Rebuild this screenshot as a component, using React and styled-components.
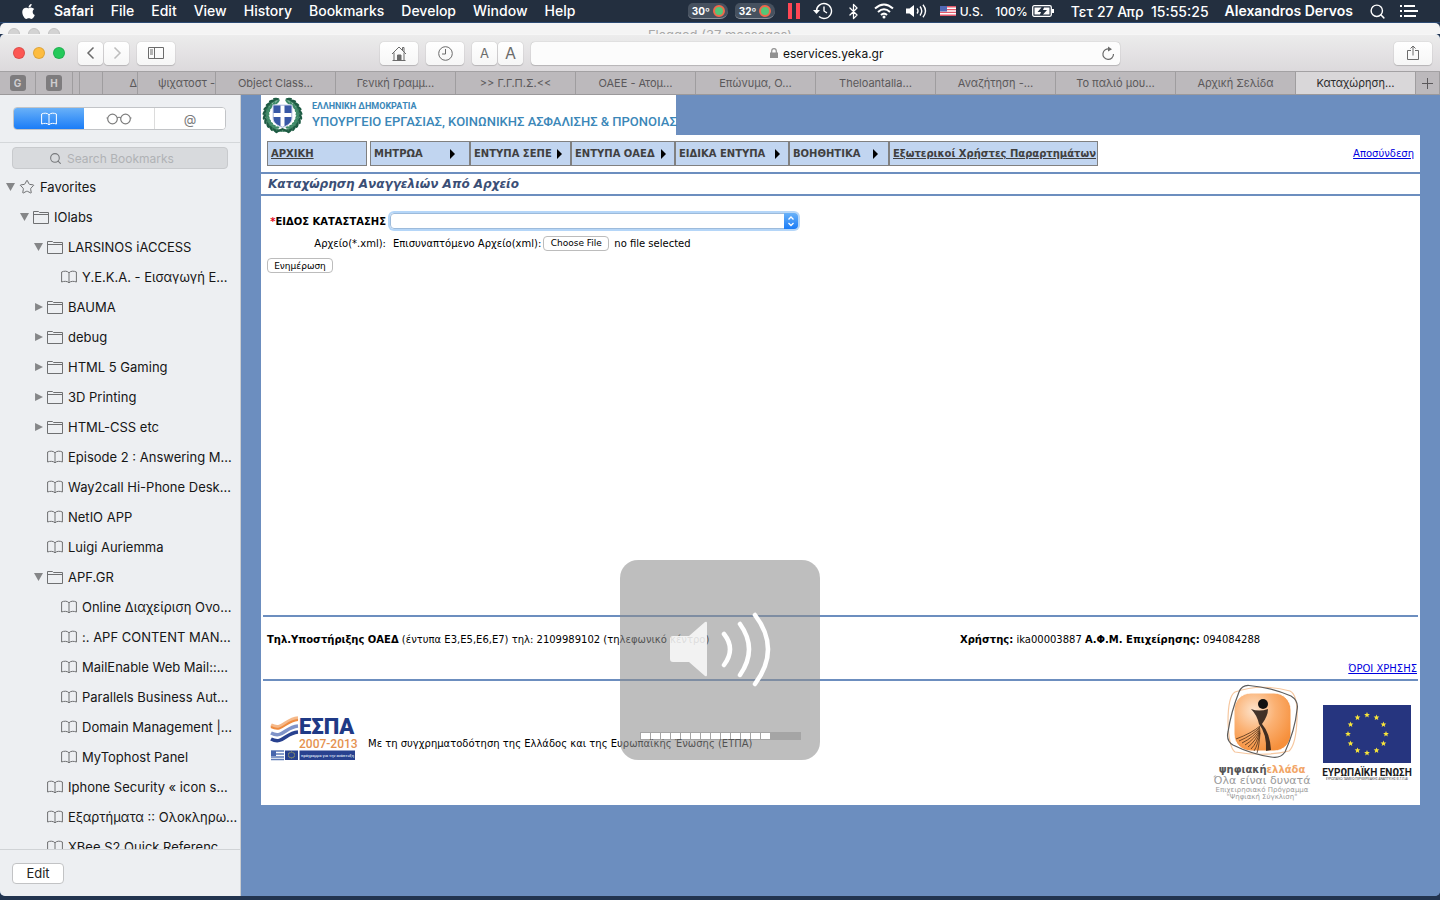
import React, { useRef, useState } from "react";
import styled, { createGlobalStyle } from "styled-components";
import { FaApple } from "react-icons/fa";
import { Bluetooth, Search, Star } from "lucide-react";

const ui = `Inter, Roboto, "Liberation Sans", sans-serif`;
const web = `"DejaVu Sans", "Liberation Sans", sans-serif`;

const GlobalStyle = createGlobalStyle`
  *, *::after {
    box-sizing: border-box;
  }
  body {
    margin: 0;
    overflow: hidden;
    background: #22344f;
  }
  button {
    font-family: inherit;
    padding: 0;
  }
`;

const Desktop = styled.div`
  display: flex;
  flex-direction: column;
  height: 100vh;
  padding-bottom: 4px;
  font-family: ${ui};
`;

const MenuBar = styled.header`
  display: flex;
  justify-content: space-between;
  align-items: center;
  height: 23px;
  flex: none;
  padding: 0 22px 0 20px;
  background: #232f3f;
  border-bottom: 1px solid #2c4a73;
  color: #fff;
  font-size: 14px;
  font-weight: 500;
  white-space: nowrap;
`;
const MenuList = styled.nav`
  display: flex;
  align-items: center;
  gap: 17px;
`;
const MenuItem = styled.button`
  border: none;
  background: none;
  color: #fff;
  font-size: 14px;
  line-height: 22px;
  font-weight: ${(p) => (p.$strong ? 600 : 500)};
`;
const Status = styled.div`
  display: flex;
  align-items: center;
  gap: ${(p) => p.$gap || 12}px;
  svg {
    display: block;
  }
`;
const Small = styled.span`
  font-size: 12px;
`;
const Temp = styled.span`
  display: flex;
  align-items: center;
  gap: 3px;
  width: 40px;
  height: 16px;
  padding-left: 4px;
  border-radius: 5px 8px 8px 5px;
  background: #46515f;
  border-bottom: 1px solid #8a929c;
  font-size: 10px;
  font-weight: 700;
  &::after {
    content: "";
    width: 12px;
    height: 12px;
    flex: none;
    border: 2px solid #f0694b;
    border-radius: 50%;
    background: #55c777;
  }
`;

const BackWindow = styled.div`
  height: 11px;
  flex: none;
  display: flex;
  gap: 8px;
  padding: 5px 8px 0;
  overflow: hidden;
  border-radius: 5px 5px 0 0;
  background: #f4f4f4;
  i {
    width: 12px;
    height: 12px;
    flex: none;
    border-radius: 50%;
    background: #d3d3d3;
    border: 1px solid #c2c2c2;
  }
  span {
    flex: 1;
    padding-right: 60px;
    text-align: center;
    font-size: 13px;
    line-height: 14px;
    color: #a8a8a8;
  }
`;

const Window = styled.div`
  display: flex;
  flex-direction: column;
  flex: 1;
  min-height: 0;
  overflow: hidden;
  border-radius: 5px;
  background: #6c8ebf;
`;
const Toolbar = styled.div`
  display: grid;
  grid-template-columns: 367fr 740fr 312fr;
  align-items: center;
  height: 37px;
  flex: none;
  padding: 0 8px 0 13px;
  background: linear-gradient(#ececec, #dcd9dc);
  border-top: 1px solid #f6f6f6;
`;
const ToolGroup = styled.div`
  display: flex;
  align-items: center;
  gap: 8px;
  justify-content: ${(p) => (p.$end ? "flex-end" : "flex-start")};
`;
const Lights = styled.div`
  display: flex;
  gap: 8px;
  margin-right: 5px;
`;
const Light = styled.button`
  width: 12px;
  height: 12px;
  border-radius: 50%;
  border: 1px solid rgba(0, 0, 0, 0.12);
  background: ${(p) => p.$color};
`;
const Pair = styled.div`
  display: flex;
  gap: 1px;
`;
const ToolButton = styled.button`
  display: flex;
  align-items: center;
  justify-content: center;
  width: ${(p) => p.$w || 38}px;
  height: 23px;
  border: none;
  border-radius: 4px;
  background: linear-gradient(#fff, #f6f6f6);
  box-shadow: 0 0 1px rgba(0, 0, 0, 0.35), 0 1px 1px rgba(0, 0, 0, 0.15);
  color: ${(p) => (p.$dim ? "#bdbdbd" : "#6b6b6b")};
  font-size: ${(p) => p.$size || 13}px;
`;
const Address = styled.div`
  position: relative;
  flex: 1;
  display: flex;
  align-items: center;
  justify-content: center;
  gap: 5px;
  height: 23px;
  border-radius: 4px;
  background: #fcfcfc;
  box-shadow: 0 0 1px rgba(0, 0, 0, 0.35), 0 1px 1px rgba(0, 0, 0, 0.15);
`;
const Url = styled.input`
  width: 108px;
  margin-right: -10px;
  border: none;
  padding: 0;
  outline: none;
  background: none;
  font-family: ${ui};
  font-size: 12px;
  color: #111;
`;
const Reload = styled.button`
  position: absolute;
  right: 5px;
  top: 4px;
  border: none;
  background: none;
  color: #6b6b6b;
  svg {
    display: block;
  }
`;

const TabBar = styled.div`
  display: flex;
  height: 24px;
  flex: none;
  background: #bcb9bc;
  border-top: 1px solid #a3a1a3;
  border-bottom: 1px solid #9b999b;
`;
const Tab = styled.button`
  display: flex;
  align-items: center;
  justify-content: ${(p) => (p.$end ? "flex-end" : "center")};
  flex: ${(p) => (p.$w ? `0 0 ${p.$w}px` : "1 1 0")};
  min-width: 0;
  overflow: hidden;
  border: none;
  border-right: 1px solid #9f9d9f;
  background: ${(p) => (p.$active ? "#d9d7d9" : "transparent")};
  color: ${(p) => (p.$active ? "#2b2b2b" : "#5a585a")};
  font-size: 11px;
  line-height: 22px;
  white-space: nowrap;
`;
const Pin = styled.span`
  width: 16px;
  height: 16px;
  border-radius: 3px;
  background: #7e7c7e;
  color: #cfcdcf;
  font-size: 10px;
  font-weight: 700;
  line-height: 16px;
`;

const Body = styled.div`
  display: flex;
  flex: 1;
  min-height: 0;
`;
const Sidebar = styled.aside`
  display: flex;
  flex-direction: column;
  width: 241px;
  flex: none;
  background: #edeff2;
  border-right: 1px solid #c9ccd0;
`;
const SideTop = styled.div`
  padding: 12px 14px 12px 13px;
  border-bottom: 1px solid #d4d7da;
`;
const Segments = styled.div`
  display: flex;
  height: 23px;
  border: 1px solid #c2c4c7;
  border-radius: 4px;
  background: #fff;
  overflow: hidden;
`;
const Segment = styled.button`
  flex: 1;
  display: flex;
  align-items: center;
  justify-content: center;
  border: none;
  border-left: ${(p) => (p.$line ? "1px solid #dcdcdc" : "none")};
  background: ${(p) => (p.$on ? "linear-gradient(#69b1f8, #1a7cf7)" : "#fff")};
  color: ${(p) => (p.$on ? "#fff" : "#7d7d7d")};
  font-size: 13px;
  line-height: 18px;
`;
const SearchBox = styled.label`
  display: flex;
  align-items: center;
  gap: 5px;
  height: 22px;
  margin: 4px 12px 3px;
  padding-left: 36px;
  border: 1px solid #c8cacd;
  border-radius: 4px;
  background: #d8dadd;
  color: #77797c;
  input {
    flex: 1;
    min-width: 0;
    border: none;
    outline: none;
    padding: 0;
    background: none;
    font-family: ${ui};
    font-size: 12px;
  }
  input::placeholder {
    color: #b0b2b5;
  }
`;
const Tree = styled.ul`
  flex: 1;
  min-height: 0;
  overflow: hidden;
  margin: 0;
  padding: 0;
  list-style: none;
`;
const Row = styled.li`
  display: flex;
  align-items: center;
  gap: 5px;
  height: 30px;
  padding-left: ${(p) => 6 + p.$level * 14}px;
  color: #6f7072;
  font-size: 13px;
  white-space: nowrap;
  svg {
    flex: none;
  }
  a {
    color: #161616;
    text-decoration: none;
  }
`;
const Arrow = styled.span`
  width: 9px;
  height: 8px;
  flex: none;
  margin-right: -1px;
  background: ${(p) => (p.$state ? "#858688" : "none")};
  clip-path: ${(p) =>
    p.$state === "open"
      ? "polygon(0 0, 100% 0, 50% 100%)"
      : "polygon(12% 0, 100% 50%, 12% 100%)"};
`;
const SideFoot = styled.div`
  height: 47px;
  flex: none;
  padding: 12px;
  border-top: 1px solid #d0d3d6;
`;
const EditButton = styled.button`
  width: 52px;
  height: 21px;
  border: 1px solid #c2c3c5;
  border-radius: 4px;
  background: #fff;
  color: #222;
  font-size: 13px;
  line-height: 18px;
`;

const Page = styled.main`
  display: flex;
  flex-direction: column;
  flex: 1;
  min-width: 0;
  padding: 0 20px 91px;
  background: #6c8ebf;
  font-family: ${web};
  font-size: 10px;
  color: #000;
`;
const Banner = styled.div`
  display: flex;
  align-items: center;
  align-self: flex-start;
  gap: 9px;
  width: 415px;
  height: 40px;
  flex: none;
  padding-left: 1px;
  background: #fff;
  color: #3b87b8;
  font-family: Roboto, "Liberation Sans", sans-serif;
  white-space: nowrap;
  svg {
    flex: none;
  }
`;
const Republic = styled.div`
  font-size: 9px;
  font-weight: 700;
  line-height: 13px;
`;
const Ministry = styled.div`
  font-size: 13px;
  font-weight: 500;
  line-height: 18px;
`;
const Sheet = styled.div`
  display: flex;
  flex-direction: column;
  flex: 1;
  background: #fff;
`;
const NavRow = styled.nav`
  display: flex;
  align-items: center;
  height: 37px;
  padding: 0 6px;
`;
const NavItem = styled.a`
  display: flex;
  align-items: center;
  justify-content: space-between;
  min-width: ${(p) => p.$w}px;
  height: 25px;
  margin-right: ${(p) => (p.$gap ? 3 : 0)}px;
  padding: 0 ${(p) => p.$pad || 1}px 0 3px;
  border: 1px solid #808080;
  background: #c1d5f0;
  color: #404040;
  font-weight: 700;
  white-space: nowrap;
  text-decoration: ${(p) => (p.$pad ? "none" : "underline")};
  &::after {
    content: "";
    display: ${(p) => (p.$pad ? "block" : "none")};
    border: 5px solid transparent;
    border-left-color: #000;
    border-right: none;
  }
`;
const PageLink = styled.a`
  margin-left: auto;
  color: #0000e0;
  text-decoration: underline;
`;
const Title = styled.h1`
  margin: 0;
  padding-left: 7px;
  border: solid #6c8ebf;
  border-width: 2px 0;
  color: #3b4f76;
  font-size: 12px;
  font-style: italic;
  line-height: 20px;
`;
const Form = styled.form`
  flex: 1;
  padding: 14px 6px;
  > button {
    display: block;
    margin-top: 4px;
  }
`;
const Field = styled.div`
  display: grid;
  grid-template-columns: 119px 1fr;
  align-items: center;
  column-gap: ${(p) => p.$gap || 4}px;
  height: 22px;
  white-space: nowrap;
  > label {
    justify-self: end;
  }
  b {
    color: #e3001b;
  }
`;
const SelectWrap = styled.div`
  position: relative;
  width: 408px;
  height: 16px;
  border-radius: 4px;
  box-shadow: 0 0 0 2px #b5d6f8;
  select {
    display: block;
    width: 100%;
    height: 16px;
    appearance: none;
    border: 1px solid #9dbbdb;
    border-radius: 4px;
    background: #fff;
    outline: none;
  }
  svg {
    position: absolute;
    right: 0;
    top: 0;
    border-radius: 0 4px 4px 0;
    background: linear-gradient(#69b1f8, #1a7cf7);
    pointer-events: none;
  }
`;
const FileCell = styled.div`
  display: flex;
  align-items: center;
  gap: 2px;
  input {
    display: none;
  }
  span {
    margin-left: 3px;
  }
`;
const FormButton = styled.button`
  min-width: 66px;
  height: 15px;
  border: 1px solid #bcbcbc;
  border-radius: 4px;
  background: #fff;
  font-size: 9px;
  line-height: 12px;
`;

const Contact = styled.div`
  display: grid;
  grid-template-columns: 693px 1fr;
  align-content: space-between;
  height: 66px;
  margin: 0 2px;
  padding: 17px 1px 5px 4px;
  border: solid #6c8ebf;
  border-width: 2px 0;
  white-space: nowrap;
  a {
    grid-column: 2;
    justify-self: end;
  }
`;
const Funding = styled.div`
  display: flex;
  align-items: center;
  gap: 10px;
  height: 124px;
  padding: 0 8px 0 9px;
  svg {
    flex: none;
  }
  > svg:first-child {
    margin-bottom: 10px;
  }
  p {
    margin: 0 auto 0 0;
    white-space: nowrap;
  }
`;

const Hud = styled.div`
  position: fixed;
  left: calc(50% - 100px);
  bottom: 140px;
  width: 200px;
  height: 200px;
  display: flex;
  flex-direction: column;
  justify-content: space-between;
  padding: 50px 19px 20px 20px;
  border-radius: 18px;
  background: rgba(140, 140, 140, 0.57);
  svg {
    margin-left: 28px;
  }
`;
const Level = styled.div`
  display: flex;
  gap: 1px;
  height: 8px;
  padding: 1px;
  background: rgba(110, 110, 110, 0.3);
  i {
    width: 9px;
    background: #fff;
  }
`;

const BookIcon = () => (
  <svg width="16" height="14" viewBox="0 0 16 14" fill="none" stroke="currentColor">
    <path d="M8 2.8C6.500 .8 3 .8.600 2v10c2.400-1 5.900-1 7.400.8 1.500-1.800 5-1.800 7.400-.8V2C13 .8 9.500.8 8 2.800v10" />
  </svg>
);
const FolderIcon = () => (
  <svg width="16" height="14" viewBox="0 0 16 14" fill="none" stroke="currentColor">
    <path d="M.5 13.500V1.500h5l1 1h9v11zM.5 4.500h15" />
  </svg>
);
const GlassesIcon = () => (
  <svg width="26" height="12" viewBox="0 0 26 12" fill="none" stroke="currentColor" strokeWidth="1.200">
    <circle cx="6.500" cy="6" r="4.800" />
    <circle cx="19.500" cy="6" r="4.800" />
    <path d="M11 5q2-1.500 4 0M.5 5h1.500M24 5h1.500" />
  </svg>
);
const Chevron = ({ d }) => (
  <svg width="10" height="14" viewBox="0 0 10 14" fill="none" stroke="currentColor" strokeWidth="1.500">
    <path d={d} />
  </svg>
);

// laurel leaves run up both sides of the shield, leaving the top open
const leaves = Array.from({ length: 10 }, (_, i) => 112 + i * 15);

const Crest = () => (
  <svg width="41" height="38" viewBox="0 0 41 38">
    {[1, -1].map((side) => (
      <g key={side} transform={side === 1 ? undefined : "matrix(-1 0 0 1 41 0)"}>
        <path d="M20.500 35C-1 33 0 7 16 3" fill="none" stroke="#3d7d5f" strokeWidth="2" />
        {leaves.map((a) => {
          const rad = (a * Math.PI) / 180;
          const x = 20.5 + 16.5 * Math.cos(rad);
          const y = 19 + 15.5 * Math.sin(rad);
          return (
            <g key={a} transform={`translate(${x} ${y}) rotate(${a + 90})`}>
              <ellipse cx="0" cy="-1.800" rx="3.200" ry="1.300" fill="#1d5b43" transform="rotate(25)" />
              <ellipse cx="0" cy="1.800" rx="3.200" ry="1.200" fill="#3f8a68" transform="rotate(-25)" />
            </g>
          );
        })}
      </g>
    ))}
    <path d="M11 9h19v13c0 5-5 8-9.500 9.500C16 30 11 27 11 22z" fill="#3858a6" stroke="#c9d2ea" />
    <path d="M18.500 9.500h4V17h7v4h-7v9l-2 1-2-1v-9h-7v-4h7z" fill="#fff" />
    <path d="M14 36l6.500-3 6.500 3" stroke="#1d5b43" strokeWidth="2" fill="none" />
  </svg>
);

const starPoints = (cx, cy, r) =>
  Array.from({ length: 10 }, (_, i) => {
    const a = (Math.PI / 5) * i - Math.PI / 2;
    const d = i % 2 ? r * 0.45 : r;
    return `${cx + d * Math.cos(a)},${cy + d * Math.sin(a)}`;
  }).join(" ");

const EuStars = ({ cx, cy, radius, size }) =>
  Array.from({ length: 12 }, (_, i) => {
    const a = (Math.PI / 6) * i;
    return (
      <polygon
        key={i}
        fill="#f8e53a"
        points={starPoints(cx + radius * Math.cos(a), cy + radius * Math.sin(a), size)}
      />
    );
  });

const EspaLogo = () => (
  <svg width="88" height="46" viewBox="0 0 88 46">
    <g fill="none" strokeWidth="3.500">
      <path d="M1 10c12 6 14-6 27-7" stroke="#f5b98a" />
      <path d="M1 12c12 6 14-6 27-7" stroke="#ee8b40" strokeWidth="2" />
      <path d="M1 18c12 6 14-6 27-7" stroke="#7f93c8" />
      <path d="M1 24c12 6 14-6 27-7" stroke="#28418f" />
    </g>
    <text x="29" y="19" fontFamily="Roboto, sans-serif" fontWeight="900" fontSize="22" fill="#1f3a86">ΕΣΠΑ</text>
    <text x="29" y="33" fontFamily="Roboto, sans-serif" fontWeight="500" fontSize="12" fill="#e5924f">2007-2013</text>
    <path d="M1 36h13M1 39h13M1 42h13M1 44.500h13" stroke="#5e7bb8" strokeWidth="1.500" />
    <path d="M1 36h5v5H1z" fill="#4766ad" />
    <path d="M15 35.500h13V45H15z" fill="#28418f" />
    <EuStars cx={21.5} cy={40} radius={3} size={0.7} />
    <path d="M29.500 35.500H85V45H29.500z" fill="#28418f" />
    <text x="31" y="42" fontFamily="Roboto, sans-serif" fontWeight="500" fontSize="4" fill="#dfe5f4">πρόγραμμα για την ανάπτυξη</text>
  </svg>
);

const DigitalLogo = () => (
  <svg width="102" height="118" viewBox="0 0 102 118">
    <defs>
      <radialGradient id="orange" cx=".35" cy=".3" r=".75">
        <stop offset="0" stopColor="#fde3cb" />
        <stop offset=".5" stopColor="#fbb173" />
        <stop offset="1" stopColor="#f6903c" />
      </radialGradient>
    </defs>
    <path
      d="M25 8Q50-1 80 7q8 4 7 28-1 26-8 32-24 6-54 1-6-4-7-30 0-26 7-30z"
      fill="none"
      stroke="#f6c79f"
      strokeWidth="1.200"
    />
    <rect x="24" y="9" width="57" height="58" rx="17" fill="url(#orange)" stroke="#fff" />
    <path
      d="M39 1.500Q60 3 81 12q8 5 6 14-2 20-12 42-5 7-14 5-20-3-38-12-7-4-5-13Q21 28 29 8q3-7 10-6.500z"
      fill="none"
      stroke="#5c5c5c"
      strokeWidth="1.200"
    />
    <circle cx="53" cy="20" r="5" fill="#111" />
    <path d="M41 25q8 3 17 0 0 7-6 15 8 9 9 26l-5 1q1-17-7-27-2-9-8-15z" fill="#2d2019" fillOpacity=".9" />
    <g stroke="#4e3018" strokeWidth=".8" fill="none">
      {[0, 1, 2, 3, 4, 5, 6, 7].map((i) => (
        <path key={i} d={`M50 ${42 + i}Q${42 + i} ${49 + i * 2} ${26 + i * 3} ${55 + i * 2}`} />
      ))}
    </g>
    <g fontFamily="DejaVu Sans, sans-serif" textAnchor="middle" fill="#9a9a9a">
      <text x="52" y="89" fontSize="10" fontWeight="700" fill="#555">
        ψηφιακή<tspan fill="#f2a566">ελλάδα</tspan>
      </text>
      <text x="52" y="100" fontSize="11">Όλα είναι δυνατά</text>
      <text x="52" y="108" fontSize="7">Επιχειρησιακό Πρόγραμμα</text>
      <text x="52" y="115" fontSize="7">"Ψηφιακή Σύγκλιση"</text>
    </g>
  </svg>
);

const EuLogo = () => (
  <svg width="90" height="78" viewBox="0 0 90 78">
    <path d="M1 1h88v58H1z" fill="#26357f" />
    <EuStars cx={45} cy={30} radius={19} size={3} />
    <g textAnchor="middle" fill="#1a1a1a">
      <text x="45" y="72" fontFamily="Roboto, sans-serif" fontWeight="700" fontSize="10">ΕΥΡΩΠΑΪΚΗ ΕΝΩΣΗ</text>
      <text x="45" y="76" fontFamily="Open Sans, sans-serif" fontSize="3">ΕΥΡΩΠΑΪΚΟ ΤΑΜΕΙΟ ΠΕΡΙΦΕΡΕΙΑΚΗΣ ΑΝΑΠΤΥΞΗΣ (Ε.Τ.Π.Α)</text>
    </g>
  </svg>
);

const menus = ["File", "Edit", "View", "History", "Bookmarks", "Develop", "Window", "Help"];

const tabs = [
  "Object Class…",
  "Γενική Γραμμ…",
  ">> Γ.Γ.Π.Σ.<<",
  "ΟΑΕΕ - Ατομ…",
  "Επώνυμα, Ο…",
  "Theloantalla…",
  "Αναζήτηση -…",
  "Το παλιό μου…",
  "Αρχική Σελίδα",
  "Καταχώρηση…",
];

const bookmarks = [
  { level: 0, type: "star", state: "open", text: "Favorites" },
  { level: 1, type: "folder", state: "open", text: "IOlabs" },
  { level: 2, type: "folder", state: "open", text: "LARSINOS iACCESS" },
  { level: 3, text: "Y.E.K.A. - Εισαγωγή Ε…" },
  { level: 2, type: "folder", state: "closed", text: "BAUMA" },
  { level: 2, type: "folder", state: "closed", text: "debug" },
  { level: 2, type: "folder", state: "closed", text: "HTML 5 Gaming" },
  { level: 2, type: "folder", state: "closed", text: "3D Printing" },
  { level: 2, type: "folder", state: "closed", text: "HTML-CSS etc" },
  { level: 2, text: "Episode 2 : Answering M…" },
  { level: 2, text: "Way2call Hi-Phone Desk…" },
  { level: 2, text: "NetIO APP" },
  { level: 2, text: "Luigi Auriemma" },
  { level: 2, type: "folder", state: "open", text: "APF.GR" },
  { level: 3, text: "Online Διαχείριση Ονο…" },
  { level: 3, text: ":. APF CONTENT MAN…" },
  { level: 3, text: "MailEnable Web Mail::…" },
  { level: 3, text: "Parallels Business Aut…" },
  { level: 3, text: "Domain Management |…" },
  { level: 3, text: "MyTophost Panel" },
  { level: 2, text: "Iphone Security « icon s…" },
  { level: 2, text: "Εξαρτήματα :: Ολοκληρω…" },
  { level: 2, text: "XBee S2 Quick Referenc…" },
];

// pad is the space after the submenu arrow
const navItems = [
  { text: "ΑΡΧΙΚΗ", w: 100, gap: true },
  { text: "ΜΗΤΡΩΑ", w: 100, pad: 14 },
  { text: "ΕΝΤΥΠΑ ΣΕΠΕ", w: 101, pad: 8 },
  { text: "ΕΝΤΥΠΑ ΟΑΕΔ", w: 104, pad: 8 },
  { text: "ΕΙΔΙΚΑ ΕΝΤΥΠΑ", w: 114, pad: 8 },
  { text: "ΒΟΗΘΗΤΙΚΑ", w: 100, pad: 10 },
  { text: "Εξωτερικοί Χρήστες Παραρτημάτων", w: 205 },
];

const rowIcon = (type) => {
  if (type === "star") return <Star size={16} strokeWidth={1.5} />;
  return type === "folder" ? <FolderIcon /> : <BookIcon />;
};

const TopMenu = () => (
  <MenuBar>
    <MenuList>
      <FaApple size={17} />
      <MenuItem $strong>Safari</MenuItem>
      {menus.map((m) => (
        <MenuItem key={m}>{m}</MenuItem>
      ))}
    </MenuList>
    <Status $gap={16}>
      <Status>
        <Status $gap={7}>
          <Temp>30º</Temp>
          <Temp>32º</Temp>
        </Status>
        <svg width="14" height="18" viewBox="0 0 14 18" stroke="#ff4654" strokeWidth="4">
          <path d="M3 1v16M11 1v16" />
        </svg>
        <svg width="20" height="18" viewBox="0 0 20 18" fill="none" stroke="#fff" strokeWidth="1.400">
          <path d="M3.500 9a7.500 7.500 0 1 1 2.500 5.600M11 4.500V9l3 2" />
          <path d="M0 8h7l-3.500 4z" fill="#fff" stroke="none" />
        </svg>
        <Bluetooth size={17} strokeWidth={1.8} />
        <svg width="20" height="16" viewBox="0 0 20 16" fill="none" stroke="#fff" strokeWidth="2">
          <path d="M1 5.500q9-8 18 0M4 9q6-5.500 12 0M7 12q3-2.800 6 0" />
          <circle cx="10" cy="14" r="1.500" fill="#fff" stroke="none" />
        </svg>
        <svg width="22" height="14" viewBox="0 0 22 14" fill="none" stroke="#fff" strokeWidth="1.400">
          <path d="M0 4.500h3.500L8 1v12L3.500 9.500H0z" fill="#fff" stroke="none" />
          <path d="M11 4.500q2 2.500 0 5M14 2.500q3.500 4.500 0 9M17 .8q5 6.200 0 12.400" />
        </svg>
        <Status $gap={4}>
          <svg width="16" height="10" viewBox="0 0 16 10">
            <path d="M0 0h16v10H0z" fill="#fff" />
            <path d="M0 .8h16M0 3.600h16M0 6.400h16M0 9.200h16" stroke="#e2586a" strokeWidth="1.400" />
            <path d="M0 0h7v5.500H0z" fill="#5268b5" />
          </svg>
          <Small>U.S.</Small>
        </Status>
        <Status $gap={4}>
          <Small>100%</Small>
          <svg width="23" height="12" viewBox="0 0 23 12">
            <rect x=".7" y=".7" width="18.600" height="10.600" rx="1.500" fill="none" stroke="#fff" strokeWidth="1.300" />
            <path d="M2.500 2.500h7L5.500 7H9l-1 2.500H2.500zM12 2.500h5.500v7H11L15 5h-4z" fill="#fff" />
            <path d="M21 4v4" stroke="#fff" strokeWidth="2" />
          </svg>
        </Status>
      </Status>
      <span>Τετ 27 Απρ&nbsp; 15:55:25</span>
      <MenuItem $strong>Alexandros Dervos</MenuItem>
      <Status $gap={14}>
        <Search size={17} strokeWidth={2} />
        <svg width="18" height="12" viewBox="0 0 18 12" stroke="#fff" strokeWidth="2">
          <path d="M0 1h2M4 1h11M0 6h2M4 6h14M0 11h2M4 11h12" />
        </svg>
      </Status>
    </Status>
  </MenuBar>
);

const BrowserBar = () => (
  <Toolbar>
    <ToolGroup>
      <Lights>
        <Light $color="#fc5753" aria-label="Close" />
        <Light $color="#fdbc40" aria-label="Minimize" />
        <Light $color="#24c95a" aria-label="Zoom" />
      </Lights>
      <Pair>
        <ToolButton $w={25} aria-label="Back"><Chevron d="M7.500 1.500 2 7l5.500 5.500" /></ToolButton>
        <ToolButton $w={25} $dim aria-label="Forward"><Chevron d="M2.500 1.500 8 7l-5.500 5.500" /></ToolButton>
      </Pair>
      <ToolButton aria-label="Sidebar">
        <svg width="16" height="12" viewBox="0 0 16 12" fill="none" stroke="currentColor">
          <path d="M.5.500h15v11H.5zM6.500.500v11M2 3h3M2 5h3M2 7h3" />
        </svg>
      </ToolButton>
    </ToolGroup>
    <ToolGroup>
      <ToolButton aria-label="Home">
        <svg width="16" height="15" viewBox="0 0 16 15" fill="none" stroke="currentColor">
          <path d="M1 8l7-7 7 7M3 6.500V14M13 6.500V14M1.500 14.500h13M11.500 4V1.500h1.500V6" />
          <path d="M6.500 9h3.500v5H6.500z" fill="currentColor" />
        </svg>
      </ToolButton>
      <ToolButton aria-label="History">
        <svg width="15" height="15" viewBox="0 0 15 15" fill="none" stroke="currentColor">
          <circle cx="7.500" cy="7.500" r="6.800" />
          <path d="M7.500 3v5H4" />
        </svg>
      </ToolButton>
      <Pair>
        <ToolButton $w={25} $size={13}>A</ToolButton>
        <ToolButton $w={25} $size={16}>A</ToolButton>
      </Pair>
      <Address>
        <svg width="8" height="10" viewBox="0 0 8 10">
          <path d="M0 4.500h8V10H0z" fill="#929292" />
          <path d="M1.700 5V3a2.300 2.300 0 0 1 4.600 0v2" fill="none" stroke="#929292" strokeWidth="1.200" />
        </svg>
        <Url aria-label="Address" defaultValue="eservices.yeka.gr" />
        <Reload aria-label="Reload">
          <svg width="14" height="15" viewBox="0 0 14 15" fill="none" stroke="currentColor" strokeWidth="1.200">
            <path d="M12.500 8A5.300 5.300 0 1 1 8.500 3" />
            <path d="M7 .5l4 2.800-4 2.200z" fill="currentColor" stroke="none" />
          </svg>
        </Reload>
      </Address>
    </ToolGroup>
    <ToolGroup $end>
      <ToolButton aria-label="Share">
        <svg width="12" height="16" viewBox="0 0 12 16" fill="none" stroke="currentColor">
          <path d="M4 5.500H.5v9h11v-9H8M6 10.500V1.500M3.500 3.500 6 1l2.500 2.500" />
        </svg>
      </ToolButton>
    </ToolGroup>
  </Toolbar>
);

const Bookmarks = () => (
  <Sidebar>
    <SideTop>
      <Segments>
        <Segment $on aria-label="Bookmarks"><BookIcon /></Segment>
        <Segment aria-label="Reading List"><GlassesIcon /></Segment>
        <Segment $line aria-label="Shared Links">@</Segment>
      </Segments>
    </SideTop>
    <SearchBox>
      <Search size={13} strokeWidth={2} />
      <input aria-label="Search Bookmarks" placeholder="Search Bookmarks" />
    </SearchBox>
    <Tree>
      {bookmarks.map((b) => (
        <Row key={b.text} $level={b.level}>
          <Arrow $state={b.state} />
          {rowIcon(b.type)}
          <a href="#bookmark">{b.text}</a>
        </Row>
      ))}
    </Tree>
    <SideFoot>
      <EditButton>Edit</EditButton>
    </SideFoot>
  </Sidebar>
);

const UploadForm = () => {
  const fileRef = useRef(null);
  const [fileName, setFileName] = useState("");
  const handleFile = (e) => {
    setFileName(e.target.files[0] ? e.target.files[0].name : "");
  };
  return (
    <Form onSubmit={(e) => e.preventDefault()}>
      <Field>
        <label htmlFor="kind"><b>*</b><strong>ΕΙΔΟΣ ΚΑΤΑΣΤΑΣΗΣ</strong></label>
        <SelectWrap>
          <select id="kind"><option></option></select>
          <svg width="14" height="16" viewBox="0 0 14 16" fill="none" stroke="#fff" strokeWidth="1.300">
            <path d="M4.500 6.500 7 4l2.500 2.500M4.500 10 7 12.500 9.500 10" />
          </svg>
        </SelectWrap>
      </Field>
      <Field $gap={7}>
        <label htmlFor="file">Αρχείο(*.xml):</label>
        <FileCell>
          Επισυναπτόμενο Αρχείο(xml):
          <input id="file" type="file" ref={fileRef} onChange={handleFile} />
          <FormButton type="button" onClick={() => fileRef.current.click()}>Choose File</FormButton>
          <span>{fileName || "no file selected"}</span>
        </FileCell>
      </Field>
      <FormButton type="submit">Ενημέρωση</FormButton>
    </Form>
  );
};

const App = () => (
  <Desktop>
    <GlobalStyle />
    <TopMenu />
    <BackWindow>
      <i /><i /><i />
      <span>Flagged (37 messages)</span>
    </BackWindow>
    <Window>
      <BrowserBar />
      <TabBar>
        <Tab $w={36}><Pin>G</Pin></Tab>
        <Tab $w={37}><Pin>H</Pin></Tab>
        <Tab $w={7} aria-label="Tab" />
        <Tab $w={23} aria-label="Tab" />
        <Tab $w={35} $end>Δ</Tab>
        <Tab $w={78} $end>ψιχατοστ -</Tab>
        {tabs.map((t, i) => (
          <Tab key={t} $active={i === tabs.length - 1}>{t}</Tab>
        ))}
        <Tab $w={24} aria-label="New tab">
          <svg width="11" height="11" viewBox="0 0 11 11" stroke="#5a585a">
            <path d="M5.500 0v11M0 5.500h11" />
          </svg>
        </Tab>
      </TabBar>
      <Body>
        <Bookmarks />
        <Page>
          <Banner>
            <Crest />
            <div>
              <Republic>ΕΛΛΗΝΙΚΗ ΔΗΜΟΚΡΑΤΙΑ</Republic>
              <Ministry>ΥΠΟΥΡΓΕΙΟ ΕΡΓΑΣΙΑΣ, ΚΟΙΝΩΝΙΚΗΣ ΑΣΦΑΛΙΣΗΣ &amp; ΠΡΟΝΟΙΑΣ</Ministry>
            </div>
          </Banner>
          <Sheet>
            <NavRow>
              {navItems.map((n) => (
                <NavItem key={n.text} href="#nav" $w={n.w} $pad={n.pad} $gap={n.gap}>{n.text}</NavItem>
              ))}
              <PageLink href="#logout">Αποσύνδεση</PageLink>
            </NavRow>
            <Title>Καταχώρηση Αναγγελιών Από Αρχείο</Title>
            <UploadForm />
            <Contact>
              <div><strong>Τηλ.Υποστήριξης ΟΑΕΔ</strong> (έντυπα Ε3,Ε5,Ε6,Ε7) τηλ: 2109989102 (τηλεφωνικό κέντρο)</div>
              <div><strong>Χρήστης:</strong> ika00003887 <strong>Α.Φ.Μ. Επιχείρησης:</strong> 094084288</div>
              <PageLink href="#terms">ΌΡΟΙ ΧΡΗΣΗΣ</PageLink>
            </Contact>
            <Funding>
              <EspaLogo />
              <p>Με τη συγχρηματοδότηση της Ελλάδος και της Ευρωπαϊκής Ένωσης (ΕΤΠΑ)</p>
              <DigitalLogo />
              <EuLogo />
            </Funding>
          </Sheet>
        </Page>
      </Body>
    </Window>
    <Hud>
      <svg width="104" height="78" viewBox="0 0 104 78">
        <path d="M5 26h16L37 12q2-1 2 1v52q0 2-2 1L21 52H5q-3 0-3-3V29q0-3 3-3z" fill="#fff" fillOpacity=".8" />
        <g fill="none" stroke="#fff" strokeWidth="4.500" strokeLinecap="round">
          <path d="M56 24q12 15 0 31M72 14q18 25 0 51M87 5q26 34 0 69" />
        </g>
      </svg>
      <Level>
        {Array.from({ length: 13 }, (_, i) => <i key={i} />)}
      </Level>
    </Hud>
  </Desktop>
);

export default App;
